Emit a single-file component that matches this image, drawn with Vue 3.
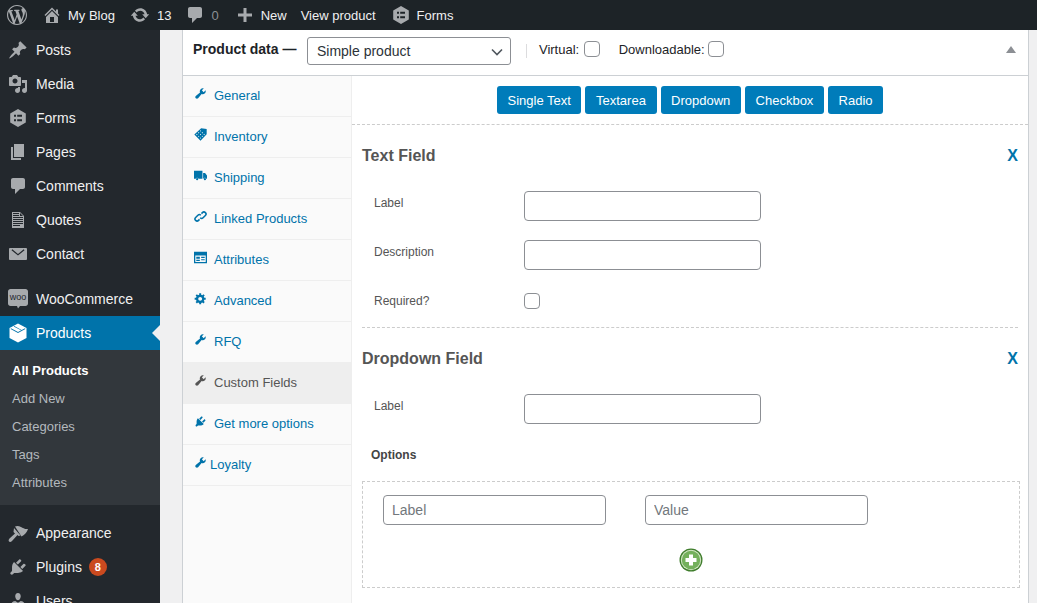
<script setup>
// tag icon is a diamond with a grid of small holes, it reads as hatching at 13px
const tagHoles = [[10, 4.5], [7.2, 7.3], [12.8, 7.3], [4.4, 10], [10, 10], [15.6, 10], [7.2, 12.8], [12.8, 12.8], [10, 15.5]]
  .map(([x, y]) => `M${x} ${y - 1}l-1 1 1 1 1-1z`)
  .join('')

const icons = {
  wp: 'M20 10c0-5.51-4.49-10-10-10C4.480 0 0 4.490 0 10c0 5.520 4.480 10 10 10 5.510 0 10-4.480 10-10zM7.780 15.370L4.370 6.220c.550-.020 1.170-.080 1.170-.080.500-.060.440-1.130-.060-1.110 0 0-1.450.110-2.370.110-.180 0-.370 0-.580-.010C4.120 2.690 6.890 1.030 10 1.030c2.320 0 4.430.870 6.020 2.330-.670-.110-1.620.380-1.620 1.540 0 .720.430 1.330.890 2.060.350.610.550 1.360.550 2.460 0 1.490-1.400 5-1.400 5l-3.030-8.350c.540-.020.820-.170.820-.170.500-.050.440-1.250-.060-1.220 0 0-1.440.120-2.380.120-.870 0-2.330-.120-2.330-.120-.500-.030-.560 1.200-.060 1.220l.920.080 1.260 3.410zM17.410 10c.240-.640.740-1.870.430-4.250.700 1.290 1.050 2.710 1.050 4.250 0 3.290-1.730 6.240-4.400 7.790.970-2.590 1.940-5.200 2.920-7.790zM6.100 18.090C3.120 16.640 1.110 13.530 1.110 10c0-1.300.230-2.480.72-3.590C3.250 10.300 4.670 14.200 6.100 18.090zm4.030-6.630l2.580 6.980c-.860.290-1.760.450-2.710.450-.790 0-1.570-.110-2.290-.330.810-2.380 1.620-4.740 2.420-7.100z',
  home: 'M16 8.500l1.530 1.530-1.060 1.060L10 4.620l-6.470 6.470-1.060-1.060L10 2.500l4 4v-2h2v4zm-6-2.460l6 5.990V18H4v-5.970zM12 17v-5H8v5h4z',
  update: 'M10.200 3.280c3.530 0 6.430 2.610 6.920 6h2.080l-3.500 4-3.500-4h2.320c-.450-1.970-2.210-3.440-4.320-3.440-1.450 0-2.730.710-3.540 1.780L4.950 5.660C6.230 4.200 8.110 3.280 10.200 3.280zm-.400 13.440c-3.520 0-6.430-2.610-6.920-6H.800l3.500-4c1.170 1.330 2.330 2.670 3.500 4H5.480c.450 1.970 2.210 3.440 4.320 3.440 1.450 0 2.730-.710 3.540-1.780l1.710 1.950c-1.280 1.460-3.150 2.390-5.250 2.390z',
  comment: 'M5 2h10c1.100 0 2 .9 2 2v7c0 1.100-.9 2-2 2h-3l-5 5v-5H5c-1.100 0-2-.9-2-2V4c0-1.100.9-2 2-2z',
  plus: 'M17 8.500v3h-5.500V17h-3v-5.500H3v-3h5.500V3h3v5.500H17z',
  forms: 'M10 1l7.800 4.500v9L10 19l-7.800-4.500v-9L10 1zM6 6.800v2h2v-2H6zm3.200 0v2H14v-2H9.200zM6 11.200v2h2v-2H6zm3.200 0v2H14v-2H9.200z',
  post: 'M10.440 3.020l1.820-1.820 6.360 6.350-1.830 1.820c-1.050-.680-2.480-.570-3.410.360l-.750.750c-.920.930-1.040 2.350-.350 3.410l-1.830 1.820-2.410-2.410-2.800 2.790c-.420.420-3.380 2.710-3.800 2.290s1.860-3.390 2.280-3.810l2.790-2.790L4.100 9.360l1.830-1.820c1.050.690 2.480.570 3.400-.360l.750-.750c.930-.920 1.050-2.350.360-3.410z',
  media: 'M13 11V4c0-.550-.450-1-1-1h-1.670L9 1H5L3.670 3H2c-.550 0-1 .450-1 1v7c0 .550.450 1 1 1h10c.550 0 1-.450 1-1zM7 4.500c1.380 0 2.500 1.120 2.500 2.500S8.380 9.500 7 9.500 4.500 8.380 4.500 7 5.620 4.500 7 4.500zM14 6h5v10.500c0 1.380-1.120 2.500-2.500 2.500S14 17.880 14 16.500s1.120-2.500 2.500-2.500c.170 0 .340.020.500.050V9h-3V6zm-4 8.050V13h2v3.500c0 1.380-1.120 2.500-2.500 2.500S7 17.880 7 16.500 8.120 14 9.500 14c.170 0 .340.020.500.050z',
  page: 'M6 15V2h10v13H6zm-1 1h8v2H3V5h2v11z',
  doc: 'M12 2l4 4v12H4V2h8zM5 3v1h6V3H5zm7 3h3l-3-3v3zM5 5v1h6V5H5zm10 3V7H5v1h10zM5 9v1h10V9H5zm10 3v-1H5v1h10zm0 2v-1H5v1h10zm-3 2v-1H5v1h7z',
  mail: 'M2 4h16c.5 0 1 .5 1 1v10c0 .5-.5 1-1 1H2c-.5 0-1-.5-1-1V5c0-.5.5-1 1-1zm1.500 2.200L10 11.500l6.500-5.300-.8-.9L10 10 4.300 5.300l-.8.9z',
  woo: 'M2.500 0h15C18.900 0 20 1.100 20 2.500v12c0 1.400-1.100 2.500-2.500 2.500H12l-2 2.500L9 17H2.500C1.100 17 0 15.900 0 14.500v-12C0 1.100 1.100 0 2.500 0z',
  box: 'M10 .5l8.500 4.500v10L10 19.500 1.500 15V5L10 .5zM3 5.200l-.4.8L10 9.900 17.400 6l-.4-.8-7 3.700-7-3.700zM6.300 3.100l-.6.300 7.300 3.900.6-.3-7.300-3.900z',
  brush: 'M7 3.500C9 2.500 11 3 13 4c2 1 4 2.500 7 2-1 3-3 6-6.500 7.500L7 3.500zM6 5l6.500 7.500-2 .5-1-1L4 18c-1 1.200-2.500 1.200-3 .5-.7-1-.3-2 .5-3L7 10.500 5.500 9 6 5z',
  plugin: 'M13.110 4.360L9.870 7.600 8 5.730l3.240-3.240c.350-.340 1.050-.200 1.560.320.520.510.660 1.210.310 1.550zm-8 1.770l.910-1.120 9.010 9.010-1.190.840c-.710.710-2.630 1.160-3.820 1.160H6.140L4.900 17.260c-.590.590-1.540.590-2.120 0-.590-.580-.590-1.530 0-2.120l1.240-1.240v-3.880c0-1.130.460-3.050 1.090-3.890zm7.260 3.970l3.240-3.240c.340-.350 1.040-.210 1.550.31.520.510.660 1.210.31 1.550l-3.240 3.250z',
  users: 'M10 9.250c-2.270 0-2.730-3.440-2.730-3.440C7 4.020 7.820 2 9.970 2c2.160 0 2.980 2.020 2.710 3.810 0 0-.410 3.440-2.680 3.440zm0 2.570L12.720 10c2.390 0 4.520 2.330 4.520 4.530v2.490s-3.650 1.130-7.240 1.130c-3.650 0-7.240-1.130-7.240-1.130v-2.490c0-2.250 1.940-4.480 4.470-4.480z',
  wrench: 'M16.680 9.770c-1.340 1.340-3.300 1.670-4.950.990l-5.410 6.520c-.990.990-2.590.990-3.580 0s-.990-2.590 0-3.580l6.520-5.420c-.680-1.650-.350-3.610.990-4.950 1.280-1.280 3.120-1.620 4.720-1.060l-2.890 2.890 2.820 2.820 2.890-2.890c.560 1.600.220 3.440-1.060 4.720z',
  tag: 'M11 .5l8.500 1v8L10 19.500.5 10 11 .5z' + tagHoles,
  truck: 'M0 2.500h13v12.500H7a2.500 2.500 0 0 0-4.500 0H0V2.500zM14 6h3l3 4v5h-1a2.500 2.500 0 0 0-4.500 0H14V6zM4.800 14a1.700 1.700 0 1 1 0 3.400 1.700 1.700 0 0 1 0-3.400zm12 0a1.700 1.700 0 1 1 0 3.400 1.700 1.700 0 0 1 0-3.400z',
  link: 'M11.500 5.500L13 4a3.200 3.200 0 0 1 4.500 0 3.200 3.200 0 0 1 0 4.500L14 12a3.200 3.200 0 0 1-4.500 0M8.500 14.500L7 16a3.200 3.200 0 0 1-4.500 0 3.200 3.200 0 0 1 0-4.500L6 8a3.200 3.200 0 0 1 4.500 0',
  attrs: 'M0 1h20v18H0V1zm2 6v10h16V7H2zm1.500 2H9v3H3.500V9zM11 9h5.500v1.800H11V9zm0 3.500h5.500v1.800H11v-1.800zm-7.500 1H9v1.800H3.500v-1.800z',
  gear: 'M18 12h-2.180c-.170.700-.440 1.350-.810 1.930l1.540 1.540-2.100 2.100-1.540-1.540c-.580.360-1.230.640-1.910.810V19H8v-2.180c-.680-.170-1.330-.450-1.910-.810l-1.540 1.540-2.120-2.120 1.540-1.540c-.360-.580-.640-1.230-.800-1.890H1V9h2.170c.160-.700.440-1.350.800-1.940L2.430 5.520l2.120-2.120 1.540 1.540c.580-.360 1.230-.640 1.910-.800V2h3v2.130c.680.170 1.330.450 1.910.810l1.540-1.540 2.100 2.100L14.980 7.060c.370.590.640 1.240.810 1.940H18v3zm-8.500 1.500c1.660 0 3-1.340 3-3s-1.340-3-3-3-3 1.340-3 3 1.340 3 3 3z'
}

const barItems = [
  { icon: 'home', text: 'My Blog', cls: 'bar-home' },
  { icon: 'update', text: '13', cls: 'bar-update' },
  { icon: 'comment', text: '0', cls: 'bar-comment' },
  { icon: 'plus', text: 'New', cls: 'bar-new' },
  { text: 'View product', cls: 'bar-view' },
  { icon: 'forms', text: 'Forms', cls: 'bar-forms' }
]

const topMenu = [
  { icon: 'post', text: 'Posts' },
  { icon: 'media', text: 'Media' },
  { icon: 'forms', text: 'Forms' },
  { icon: 'page', text: 'Pages' },
  { icon: 'comment', text: 'Comments' },
  { icon: 'doc', text: 'Quotes' },
  { icon: 'mail', text: 'Contact' }
]

const subMenu = ['All Products', 'Add New', 'Categories', 'Tags', 'Attributes']

const tabs = [
  { icon: 'wrench', text: 'General' },
  { icon: 'tag', text: 'Inventory' },
  { icon: 'truck', text: 'Shipping' },
  { icon: 'link', text: 'Linked Products', stroked: true },
  { icon: 'attrs', text: 'Attributes' },
  { icon: 'gear', text: 'Advanced' },
  { icon: 'wrench', text: 'RFQ' },
  { icon: 'wrench', text: 'Custom Fields', active: true },
  { icon: 'plugin', text: 'Get more options' },
  { icon: 'wrench', text: 'Loyalty', tight: true }
]

const fieldButtons = ['Single Text', 'Textarea', 'Dropdown', 'Checkbox', 'Radio']
</script>

<template>
  <div class="page">
    <header class="adminbar">
      <svg class="bar-logo" viewBox="0 0 20 20"><path :d="icons.wp" /></svg>
      <div v-for="item in barItems" :key="item.text" class="bar-item" :class="item.cls">
        <svg v-if="item.icon" viewBox="0 0 20 20"><path :d="icons[item.icon]" /></svg>
        <span>{{ item.text }}</span>
      </div>
    </header>

    <div class="body">
      <nav class="sidebar">
        <div class="menu-group">
          <div v-for="item in topMenu" :key="item.text" class="menu-item">
            <svg viewBox="0 0 20 20"><path :d="icons[item.icon]" /></svg>
            <span>{{ item.text }}</span>
          </div>
        </div>

        <div class="menu-group sep">
          <div class="menu-item">
            <span class="woo-icon">
              <svg viewBox="0 0 20 20"><path :d="icons.woo" /></svg>
              <em>woo</em>
            </span>
            <span>WooCommerce</span>
          </div>
          <div class="menu-item current">
            <svg viewBox="0 0 20 20"><path :d="icons.box" /></svg>
            <span>Products</span>
          </div>
          <div class="submenu">
            <div v-for="(s, i) in subMenu" :key="s" class="sub-item" :class="{ on: i === 0 }">{{ s }}</div>
          </div>
        </div>

        <div class="menu-group sep">
          <div class="menu-item">
            <svg viewBox="0 0 20 20"><path :d="icons.brush" /></svg>
            <span>Appearance</span>
          </div>
          <div class="menu-item">
            <svg viewBox="0 0 20 20"><path :d="icons.plugin" /></svg>
            <span>Plugins</span>
            <b class="badge">8</b>
          </div>
          <div class="menu-item">
            <svg viewBox="0 0 20 20"><path :d="icons.users" /></svg>
            <span>Users</span>
          </div>
        </div>
      </nav>

      <main class="content">
        <section class="panel">
          <div class="panel-head">
            <strong class="head-title">Product data —</strong>
            <div class="select-wrap">
              <select class="type-select">
                <option>Simple product</option>
              </select>
              <svg class="chevron" viewBox="0 0 12 8"><path d="M1 1.500l5 5 5-5" /></svg>
            </div>
            <span class="head-sep"></span>
            <label class="head-check">Virtual: <input type="checkbox" class="check" /></label>
            <label class="head-check dl">Downloadable: <input type="checkbox" class="check" /></label>
            <span class="collapse"></span>
          </div>

          <div class="panel-main">
            <ul class="tabs">
              <li v-for="tab in tabs" :key="tab.text" :class="{ active: tab.active, tight: tab.tight, stroked: tab.stroked }">
                <svg viewBox="0 0 20 20"><path :d="icons[tab.icon]" /></svg>
                <span>{{ tab.text }}</span>
              </li>
            </ul>

            <div class="pane">
              <div class="btn-row">
                <button v-for="b in fieldButtons" :key="b" class="add-btn">{{ b }}</button>
              </div>

              <div class="fields">
                <div class="field-block first">
                  <div class="block-head">
                    <h3>Text Field</h3>
                    <a class="remove">X</a>
                  </div>
                  <div class="form-row">
                    <label>Label</label>
                    <input type="text" class="text-input" />
                  </div>
                  <div class="form-row">
                    <label>Description</label>
                    <input type="text" class="text-input" />
                  </div>
                  <div class="form-row required">
                    <label>Required?</label>
                    <input type="checkbox" class="check" />
                  </div>
                </div>

                <div class="field-block">
                  <div class="block-head">
                    <h3>Dropdown Field</h3>
                    <a class="remove">X</a>
                  </div>
                  <div class="form-row">
                    <label>Label</label>
                    <input type="text" class="text-input" />
                  </div>
                  <div class="options-title">Options</div>
                </div>

                <div class="options-box">
                  <div class="options-row">
                    <input type="text" class="option-input" placeholder="Label" />
                    <input type="text" class="option-input" placeholder="Value" />
                  </div>
                  <div class="add-wrap">
                    <svg class="add-option" viewBox="0 0 24 24">
                      <circle cx="12" cy="12" r="11.5" fill="#3f7d2c" />
                      <circle cx="12" cy="12" r="10.2" fill="#d6e8c8" />
                      <circle cx="12" cy="12" r="9.2" fill="#74b05c" />
                      <path d="M10 6.500h4v3.500h3.500v4H14v3.500h-4V14H6.500v-4H10z" fill="#fff" />
                    </svg>
                  </div>
                </div>
              </div>
            </div>
          </div>
        </section>
      </main>
    </div>
  </div>
</template>

<style>
body {
  background: #f0f0f1;
}
</style>

<style scoped>
.page {
  width: 1037px;
  height: 603px;
  overflow: hidden;
  display: flex;
  flex-direction: column;
  background: #f0f0f1;
  font-family: "Liberation Sans", Arial, sans-serif;
}

.adminbar {
  height: 30px;
  flex: none;
  display: flex;
  align-items: center;
  background: #1d2327;
  color: #f0f0f1;
  font-size: 13px;
}

.adminbar svg {
  fill: #a7aaad;
  width: 20px;
  height: 20px;
  flex: none;
}

.bar-logo {
  margin-left: 7px;
}

.bar-item {
  display: flex;
  align-items: center;
}

.bar-home { margin-left: 15px; gap: 6px; }
.bar-update { margin-left: 15px; gap: 7px; }
.bar-comment { margin-left: 14px; gap: 6px; }
.bar-comment span { color: #8c8f94; }
.bar-new { margin-left: 16px; gap: 6px; }
.bar-view { margin-left: 14px; }
.bar-forms { margin-left: 15px; gap: 6px; }

.body {
  flex: 1;
  min-height: 0;
  display: flex;
}

.sidebar {
  width: 160px;
  flex: none;
  background: #23282d;
  padding-top: 3px;
  overflow: hidden;
}

.menu-group.sep {
  margin-top: 11px;
}

.menu-item {
  position: relative;
  height: 34px;
  display: flex;
  align-items: center;
  padding-left: 8px;
  color: #f0f0f1;
  font-size: 14px;
}

.menu-item > svg,
.woo-icon {
  width: 20px;
  height: 20px;
  margin-right: 8px;
  flex: none;
  fill: #a7aaad;
}

.woo-icon {
  position: relative;
  display: block;
}

.woo-icon svg {
  width: 20px;
  height: 20px;
  display: block;
}

.woo-icon em {
  position: absolute;
  left: 0;
  right: 0;
  top: 3px;
  text-align: center;
  font-style: normal;
  font-size: 9px;
  line-height: 10px;
  color: #23282d;
}

.menu-item.current {
  background: #0073aa;
  color: #fff;
}

.menu-item.current > svg {
  fill: #fff;
}

.menu-item.current::after {
  content: "";
  position: absolute;
  right: 0;
  top: 9px;
  border: 8px solid transparent;
  border-left-width: 0;
  border-right-color: #f0f0f1;
}

.submenu {
  background: #32373c;
  padding: 7px 0 8px;
}

.sub-item {
  height: 28px;
  line-height: 28px;
  padding-left: 12px;
  font-size: 13px;
  color: #b4b9be;
}

.sub-item.on {
  color: #fff;
  font-weight: 700;
}

.badge {
  width: 18px;
  height: 18px;
  margin-left: 7px;
  border-radius: 50%;
  background: #ca4a1f;
  color: #fff;
  font-size: 11px;
  line-height: 18px;
  text-align: center;
}

.content {
  flex: 1;
  min-width: 0;
  padding: 0 8px 0 22px;
}

.panel {
  height: 100%;
  display: flex;
  flex-direction: column;
  background: #fff;
  border-left: 1px solid #ccd0d4;
  border-right: 1px solid #ccd0d4;
  box-sizing: border-box;
  color: #32373c;
}

.panel-head {
  height: 46px;
  flex: none;
  box-sizing: border-box;
  border-bottom: 1px solid #ccd0d4;
  display: flex;
  align-items: center;
  padding: 0 12px 3px 10px;
  font-size: 13px;
  color: #1d2327;
}

.head-title {
  margin-bottom: 4px;
  font-size: 14px;
  font-weight: 700;
  color: #1d2327;
}

.select-wrap {
  position: relative;
  margin-left: 10.5px;
  width: 204px;
  height: 28px;
  flex: none;
}

.type-select {
  appearance: none;
  width: 100%;
  height: 100%;
  box-sizing: border-box;
  padding: 0 24px 0 9px;
  border: 1px solid #8c8f94;
  border-radius: 3px;
  background: #fff;
  color: #2c3338;
  font-family: inherit;
  font-size: 14px;
}

.chevron {
  position: absolute;
  right: 8px;
  top: 11px;
  width: 12px;
  height: 8px;
  fill: none;
  stroke: #50575e;
  stroke-width: 1.6;
}

.head-sep {
  width: 1px;
  height: 14px;
  background: #dcdcde;
  margin: 0 12px 0 15px;
}

.head-check {
  display: flex;
  align-items: center;
  gap: 4.5px;
  margin-bottom: 4px;
  font-size: 13px;
}

.head-check.dl {
  margin-left: 19px;
  gap: 3px;
}

.check {
  appearance: none;
  width: 16px;
  height: 16px;
  margin: 0;
  box-sizing: border-box;
  border: 1px solid #8c8f94;
  border-radius: 4px;
  background: #fff;
  flex: none;
}

.collapse {
  margin-left: auto;
  margin-bottom: 4px;
  border-left: 5px solid transparent;
  border-right: 5px solid transparent;
  border-bottom: 7px solid #8c8f94;
}

.panel-main {
  flex: 1;
  min-height: 0;
  display: flex;
}

.tabs {
  width: 169px;
  flex: none;
  box-sizing: border-box;
  margin: 0;
  padding: 0;
  list-style: none;
  background: #fafafa;
  border-right: 1px solid #eee;
}

.tabs li {
  height: 41px;
  box-sizing: border-box;
  border-bottom: 1px solid #eee;
  display: flex;
  align-items: center;
  padding: 0 0 2px 11px;
  color: #0073aa;
  font-size: 13px;
}

.tabs li svg {
  width: 13px;
  height: 13px;
  margin-right: 7px;
  margin-top: -3px;
  flex: none;
  fill: #0073aa;
}

.tabs li.stroked svg {
  fill: none;
  stroke: #0073aa;
  stroke-width: 2.4;
}

.tabs li.active {
  background: #eee;
  color: #555;
}

.tabs li.active svg {
  fill: #555;
}

.tabs li.tight svg {
  margin-right: 3px;
}

.pane {
  flex: 1;
  min-width: 0;
}

.btn-row {
  height: 49px;
  box-sizing: border-box;
  padding-top: 10px;
  border-bottom: 1px dashed #ccc;
  display: flex;
  justify-content: center;
  gap: 4px;
}

.add-btn {
  height: 28px;
  padding: 0 10.6px;
  border: 0;
  border-radius: 3px;
  background: #007cba;
  color: #fff;
  font-family: inherit;
  font-size: 13px;
}

.fields {
  padding: 0 8px 0 10px;
}

.field-block {
  margin-right: 2px;
  padding-top: 18px;
}

.field-block.first {
  padding-bottom: 18px;
  border-bottom: 1px dashed #ccc;
}

.block-head {
  height: 26px;
  margin-bottom: 22px;
  display: flex;
  align-items: center;
  justify-content: space-between;
}

.block-head h3 {
  margin: 0;
  font-size: 16px;
  font-weight: 700;
  color: #555;
}

.remove {
  font-size: 16px;
  font-weight: 700;
  color: #0073aa;
}

.form-row {
  display: flex;
  align-items: flex-start;
  padding-left: 12px;
  margin-bottom: 19px;
}

.form-row label {
  width: 150px;
  flex: none;
  padding-top: 5px;
  font-size: 12px;
  color: #555;
}

.form-row.required {
  margin: 23px 0 0;
}

.form-row.required label {
  padding-top: 1px;
}

.text-input {
  width: 237px;
  height: 30px;
  box-sizing: border-box;
  border: 1px solid #8c8f94;
  border-radius: 4px;
  background: #fff;
}

.options-title {
  margin-top: 23px;
  padding-left: 9px;
  height: 16px;
  line-height: 16px;
  font-size: 12px;
  font-weight: 700;
  color: #444;
}

.options-box {
  margin-top: 18px;
  box-sizing: border-box;
  border: 1px dashed #ccc;
  padding: 13px 20px 15px;
}

.options-row {
  display: flex;
  gap: 39px;
}

.option-input {
  width: 223px;
  height: 30px;
  box-sizing: border-box;
  padding: 0 8px;
  border: 1px solid #8c8f94;
  border-radius: 4px;
  background: #fff;
  font-family: inherit;
  font-size: 14px;
}

.option-input::placeholder {
  color: #72777c;
}

.add-wrap {
  margin-top: 23px;
  display: flex;
  justify-content: center;
}

.add-option {
  width: 24px;
  height: 24px;
  display: block;
}
</style>
